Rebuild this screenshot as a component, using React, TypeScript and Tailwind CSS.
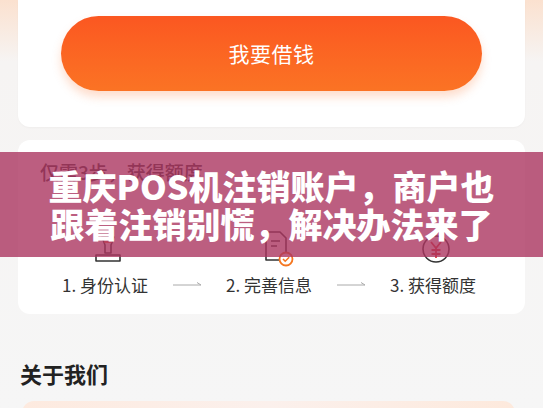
import React from "react";

const font = { fontFamily: '"Noto Sans CJK SC", "Noto Sans", sans-serif' };

function StampIcon() {
    return (
        <svg width="34" height="34" viewBox="0 0 34 34" fill="none">
            <path d="M11 4h12l-3 8v8h-6v-8z" stroke="#333" strokeWidth="1.6" strokeLinejoin="round" />
            <path d="M5 22h24v6H5z" stroke="#333" strokeWidth="1.6" strokeLinejoin="round" />
            <path d="M13 9h8" stroke="#f05a28" strokeWidth="1.6" />
        </svg>
    );
}

function DocIcon() {
    return (
        <svg width="36" height="38" viewBox="0 0 36 38" fill="none">
            <path d="M6 3h14l6 6v22H6z" stroke="#333" strokeWidth="1.6" strokeLinejoin="round" />
            <path d="M11 12h9M11 17h6" stroke="#333" strokeWidth="1.6" />
            <circle cx="26" cy="30" r="6.5" fill="#fff" stroke="#f5761f" strokeWidth="1.8" />
            <path d="M23 30l2.2 2.2 4-4" stroke="#f5761f" strokeWidth="1.6" fill="none" />
        </svg>
    );
}

function YuanIcon() {
    return (
        <svg width="36" height="36" viewBox="0 0 36 36" fill="none">
            <circle cx="18" cy="18" r="13" stroke="#333" strokeWidth="1.6" />
            <path d="M13 11l5 6 5-6M18 17v10M13.5 19h9M13.5 23h9" stroke="#e23b3b" strokeWidth="1.8" />
        </svg>
    );
}

function Arrow() {
    return (
        <svg width="30" height="8" viewBox="0 0 30 8" fill="none">
            <path d="M0 4h28M24 1.5l4 2.5" stroke="#aaa" strokeWidth="1" />
        </svg>
    );
}

export default function App() {
    return (
        <div
            className="relative w-[543px] h-[408px] overflow-hidden bg-gradient-to-b from-[#fbe1cf] via-[#f6f4f3] via-[15%] to-[#f6f6f6]"
            style={font}
        >
            <div className="mx-[18px] bg-white rounded-b-xl pt-4 pb-9 flex justify-center shadow-[0_1px_2px_rgba(0,0,0,0.03)]">
                <button className="w-[421px] h-[75px] rounded-full bg-gradient-to-b from-[#fb5721] to-[#fb7324] text-white text-[21px] tracking-wide shadow-[0_6px_10px_rgba(251,120,50,0.25)]">
                    我要借钱
                </button>
            </div>

            <div className="mx-[18px] mt-[13px] bg-white rounded-xl h-[174px] pt-[22px]">
                <div className="pl-[22px] text-[19px] text-[#333] font-medium leading-none">仅需3步，获得额度</div>
                <div className="mt-[46px] flex pl-[73px] items-end h-[40px]">
                    <StampIcon />
                    <div className="ml-[135px]"><DocIcon /></div>
                    <div className="ml-[122px]"><YuanIcon /></div>
                </div>
                <div className="mt-[5px] flex items-center pl-[44px] text-[17px] text-[#333]">
                    <span>1. 身份认证</span>
                    <span className="ml-[25px] mr-[23px]"><Arrow /></span>
                    <span>2. 完善信息</span>
                    <span className="ml-[25px] mr-[23px]"><Arrow /></span>
                    <span>3. 获得额度</span>
                </div>
            </div>

            <div className="ml-[20px] mt-[48px] text-[22px] font-bold text-[#222] leading-none">关于我们</div>
            <div className="ml-[22px] mr-[28px] mt-[17px] h-[40px] rounded-t-xl bg-gradient-to-r from-[#fdeadf] via-[#fbf0ec] to-[#fde9dc]" />

            <div className="absolute left-0 right-0 top-[152px] h-[105px] bg-[rgba(171,54,96,0.8)] flex flex-col items-center justify-center">
                <div className="text-white font-black text-[34px] leading-[38px] text-center">
                    <div>重庆POS机注销账户，商户也</div>
                    <div>跟着注销别慌，解决办法来了</div>
                </div>
            </div>
        </div>
    );
}
